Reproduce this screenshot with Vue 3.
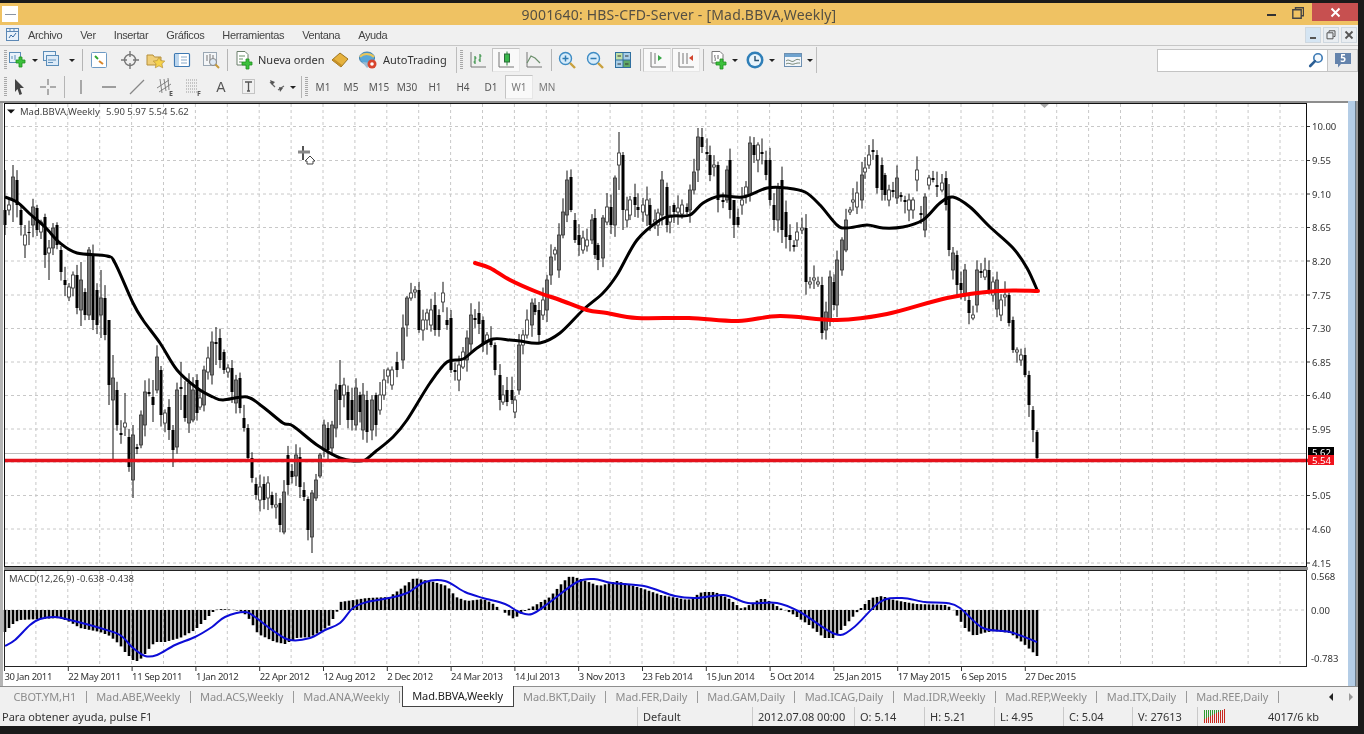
<script setup>
// body top, body bottom, 1 = bear (black), optional wick hi / lo
const keys = [[5,210,225,1,170,235],[9,205,210,0],[13,177,200,0,165,222],[17,180,205,1],[21,210,225,1],[25,235,245,0,225,258],[29,232,233,1],[33,207,225,0],[37,208,230,1],[41,222,232,0],[45,217,255,1],[49,248,253,0,240,280],[53,228,248,0],[57,225,245,1],[61,250,272,1],[65,280,285,1],[69,287,297,0],[73,275,288,0],[77,275,308,1],[81,280,310,0,262,326],[85,292,315,1],[89,250,315,0,247,320],[93,255,320,1],[97,290,325,1],[101,298,315,0,270,338],[105,298,335,1],[109,320,385,1,320,405],[113,378,400,0,355,460],[117,390,425,1],[121,433,435,1],[125,423,427,0,393,436],[129,437,467,1],[133,435,480,0,425,498],[137,447,449,1],[141,415,445,0],[145,392,425,0],[149,392,394,1],[153,397,405,1,380,422],[157,357,390,0],[161,370,415,1],[165,413,423,0],[169,407,430,1],[173,430,450,1,425,467],[177,390,447,0],[181,387,389,1,362,410],[185,395,418,1],[189,383,423,0],[193,390,420,0],[197,380,413,1],[200,398,407,0],[204,370,405,0],[208,358,372,0],[212,342,375,0],[216,342,344,1,327,365],[220,338,360,1],[224,352,370,1],[228,368,372,0],[232,368,392,1],[236,380,403,0],[240,378,408,1],[244,418,428,1],[248,428,458,1],[252,458,478,1],[256,484,495,1],[260,487,500,0],[264,484,500,1],[268,483,498,0],[272,495,505,1],[276,505,507,0],[280,503,525,1],[284,492,532,0],[288,455,485,1],[292,471,477,1],[296,455,476,0],[300,457,487,1],[304,490,497,1],[308,499,530,1],[312,493,537,0,490,553],[316,480,498,0],[320,455,476,0],[324,425,450,0],[328,428,450,1],[332,425,448,0],[336,390,428,0],[340,385,400,1,360,425],[344,385,395,0],[348,392,420,1],[352,400,420,1],[356,388,425,0],[360,395,412,1],[363,395,430,0],[367,400,432,1],[372,400,430,0],[376,395,425,1],[380,395,410,0],[384,380,395,0],[388,370,376,0],[392,370,385,0],[397,362,370,1],[403,328,360,0],[407,298,325,0],[411,293,298,0],[415,290,292,0],[419,290,330,1],[423,320,330,0],[427,313,320,0],[431,310,325,0],[435,305,330,1],[439,315,330,1],[443,293,302,0],[447,320,325,1],[451,318,370,1],[455,370,372,1],[459,365,380,0],[463,352,367,0],[467,338,360,0],[471,315,344,0],[475,318,320,1],[479,313,324,1],[483,320,345,1],[487,335,342,0],[491,340,345,1],[495,345,370,1],[500,375,400,1],[503,395,402,0],[507,390,402,1],[512,390,400,1],[515,400,412,0],[519,345,390,0],[523,335,345,0],[527,320,335,0],[532,303,325,0],[535,305,312,1],[539,310,335,1],[543,300,315,0],[547,280,310,0],[551,257,275,0],[555,250,254,0],[559,235,270,0],[563,212,235,0],[567,180,215,0],[571,177,210,1],[575,220,240,1],[579,235,245,1],[583,238,250,0],[587,240,246,0],[592,220,240,0],[595,218,255,1],[598,245,260,1],[603,218,258,0],[607,207,222,0],[611,207,225,1],[615,178,225,0],[619,153,165,0,132,190],[623,155,210,1,152,230],[627,210,220,0],[630,200,215,0],[635,197,205,1],[638,207,210,1],[643,205,212,0],[647,200,215,0],[650,205,225,1],[655,220,222,0],[658,213,225,0],[662,180,215,0],[667,187,225,1],[670,215,222,0],[674,205,212,1],[678,208,212,0],[682,205,214,0],[687,207,212,1],[690,190,210,0],[694,172,190,0],[698,137,170,0,128,182],[702,137,147,1,128,153],[707,152,154,1],[710,155,175,1],[714,165,167,0],[718,165,200,1],[723,200,202,1],[727,170,200,0],[730,160,210,1],[734,200,225,1,200,238],[738,217,225,1],[742,200,205,0],[746,187,195,0],[750,143,195,0],[754,145,155,1],[758,145,160,0],[762,152,154,1],[766,160,175,1],[770,160,200,1],[774,205,220,1],[778,187,220,0],[782,180,230,1],[786,212,237,1],[790,235,240,1],[794,245,247,1],[797,232,240,0],[802,228,230,0],[806,228,282,1],[810,282,284,0],[814,278,280,0],[818,282,284,0],[822,285,333,1],[826,312,330,0],[830,277,320,0],[834,282,305,1],[837,260,305,0],[842,240,270,0],[846,220,250,0],[850,210,212,0],[853,200,202,0],[857,193,207,0],[862,175,200,0],[865,168,172,0],[869,155,165,0],[873,150,152,1],[877,155,188,1],[882,165,190,1],[885,175,195,1],[889,190,200,0],[893,190,192,1],[897,178,198,0],[901,195,197,1],[905,200,202,1],[909,200,210,0],[913,200,210,0],[917,170,180,0],[921,213,215,1],[925,197,230,0],[929,178,185,0],[933,178,180,1],[937,185,187,1],[942,183,190,0],[946,178,205,1],[949,197,250,1],[953,253,270,0],[957,255,285,1],[961,283,290,1],[965,270,295,0],[969,300,313,1],[973,315,318,0],[977,270,305,0],[981,271,273,1],[985,270,277,0],[989,270,290,1],[993,282,295,0],[997,280,309,0],[1001,300,315,0],[1005,295,297,0],[1009,295,323,1],[1013,320,350,1],[1017,350,352,0],[1021,355,360,0],[1025,355,375,1],[1029,375,405,1],[1033,410,430,1],[1037,432,458,1,430,459]]

let seed = 17
const rnd = () => (seed = (seed * 137 + 59) % 1009) / 1009

const candles = keys.map(([x, top, bot, bear, hi, lo]) => {
  const h = bot - top
  return {
    x, top, h, bear,
    hi: hi ?? top - 2 - rnd() * 12,
    lo: lo ?? bot + 2 + rnd() * 11,
    fill: bear ? '#000' : h > 16 ? '#777' : '#fff'
  }
})

function lerp(pts, x) {
  for (let i = 1; i < pts.length; i++) {
    if (x <= pts[i][0]) {
      const [x0, y0] = pts[i - 1]
      const [x1, y1] = pts[i]
      return y0 + (y1 - y0) * (x - x0) / (x1 - x0)
    }
  }
  return pts[pts.length - 1][1]
}

const histPts = [[5,632],[10,627],[15,622],[20,620],[40,619],[60,618],[70,622],[80,628],[100,632],[110,636],[120,645],[125,652],[133,660],[137,661],[142,658],[148,650],[155,642],[165,642],[180,638],[195,630],[205,620],[215,610],[222,609],[235,610],[243,612],[250,620],[258,634],[275,642],[285,644],[297,638],[310,637],[320,632],[330,625],[335,615],[338,610],[340,602],[367,598],[389,597],[402,588],[414,578],[434,582],[447,586],[456,597],[467,601],[483,599],[492,603],[501,610],[514,619],[523,612],[532,607],[550,597],[563,582],[570,576],[581,579],[599,586],[617,581],[644,589],[661,595],[688,600],[702,592],[715,592],[728,598],[742,609],[760,599],[766,599],[780,608],[791,613],[809,625],[824,638],[833,638],[844,627],[858,611],[871,598],[882,596],[894,600],[916,604],[947,605],[954,611],[965,628],[974,636],[983,633],[994,631],[1010,633],[1023,643],[1037,656]]

const bars = []
for (let x = 5; x <= 1037; x += 4) bars.push({ x, y: lerp(histPts, x) })

// catmull-rom through the points, the indicators are smooth curves
function curve(p) {
  let d = `M${p[0][0]} ${p[0][1]}`
  for (let i = 0; i < p.length - 1; i++) {
    const a = p[i - 1] || p[i]
    const b = p[i]
    const c = p[i + 1]
    const e = p[i + 2] || c
    const c1 = [b[0] + (c[0] - a[0]) / 6, b[1] + (c[1] - a[1]) / 6]
    const c2 = [c[0] - (e[0] - b[0]) / 6, c[1] - (e[1] - b[1]) / 6]
    d += `C${c1[0].toFixed(1)} ${c1[1].toFixed(1)} ${c2[0].toFixed(1)} ${c2[1].toFixed(1)} ${c[0]} ${c[1]}`
  }
  return d
}

const ma = curve([[5,197],[17,202],[30,214],[45,227],[60,243],[77,253],[107,256],[115,263],[133,303],[143,320],[160,343],[177,370],[197,388],[213,397],[223,400],[247,397],[263,407],[283,423],[293,426],[317,445],[340,458],[355,461],[365,460],[375,452],[393,437],[407,420],[430,383],[447,362],[463,359],[477,348],[493,339],[510,340],[520,341],[540,343],[560,333],[583,310],[603,293],[617,275],[637,240],[660,220],[673,216],[690,215],[703,203],[720,196],[743,197],[767,188],[787,188],[805,192],[820,205],[837,225],[847,228],[867,225],[883,228],[903,227],[923,220],[940,203],[953,197],[970,207],[990,227],[1013,248],[1027,268],[1038,292]])

const red = curve([[475,263],[490,268],[510,280],[537,292],[560,300],[587,310],[607,313],[637,318],[689,318],[738,321],[780,316],[837,320],[887,314],[947,298],[997,291],[1038,291]])

const signal = curve([[5,646],[15,640],[30,625],[40,619],[55,617],[70,620],[100,628],[120,635],[133,648],[145,656],[157,655],[175,645],[195,637],[212,627],[225,617],[245,612],[255,617],[275,632],[290,640],[310,638],[325,630],[340,623],[353,608],[367,602],[389,598],[407,593],[425,582],[445,581],[465,592],[483,598],[505,604],[519,612],[532,614],[550,602],[577,582],[594,579],[612,583],[644,586],[675,596],[697,598],[724,595],[748,603],[777,603],[800,612],[835,634],[853,628],[880,602],[902,598],[925,602],[947,603],[960,608],[983,628],[1010,632],[1037,642]])

const gridX = []
for (let i = 1; i <= 40; i++) gridX.push(4 + 31.9 * i)

const prices = [['10.00',126.5],['9.55',160.5],['9.10',194],['8.65',227.5],['8.20',261],['7.75',295],['7.30',328.5],['6.85',362],['6.40',395.5],['5.95',429],['5.05',495.5],['4.60',529],['4.15',563]]
const gridY = [...prices.map(p => p[1]), 462]

const dates = ['30 Jan 2011','22 May 2011','11 Sep 2011','1 Jan 2012','22 Apr 2012','12 Aug 2012','2 Dec 2012','24 Mar 2013','14 Jul 2013','3 Nov 2013','23 Feb 2014','15 Jun 2014','5 Oct 2014','25 Jan 2015','17 May 2015','6 Sep 2015','27 Dec 2015']

const menu = ['Archivo','Ver','Insertar','Gráficos','Herramientas','Ventana','Ayuda']
const periods = ['M1','M5','M15','M30','H1','H4','D1','W1','MN']
const tabs = ['CBOT.YM,H1','Mad.ABE,Weekly','Mad.ACS,Weekly','Mad.ANA,Weekly','Mad.BBVA,Weekly','Mad.BKT,Daily','Mad.FER,Daily','Mad.GAM,Daily','Mad.ICAG,Daily','Mad.IDR,Weekly','Mad.REP,Weekly','Mad.ITX,Daily','Mad.REE,Daily']

const status = [
  { t: 'Para obtener ayuda, pulse F1', w: 638 },
  { t: 'Default', w: 115 },
  { t: '2012.07.08 00:00', w: 102 },
  { t: 'O: 5.14', w: 70 },
  { t: 'H: 5.21', w: 70 },
  { t: 'L: 4.95', w: 69 },
  { t: 'C: 5.04', w: 69 },
  { t: 'V: 27613', w: 65 }
]
const meter = Array.from({ length: 11 }, (_, i) => i)
</script>

<template>
  <div class="screen">
    <div class="win">
      <div class="title">
        <div class="logo"><span class="logo-in"><i class="logo-mark"></i></span></div>
        <div class="title-text">9001640: HBS-CFD-Server - [Mad.BBVA,Weekly]</div>
        <div class="wctl">
          <span class="w-min"></span>
          <span class="w-max">
            <svg width="12" height="12" viewBox="0 0 12 12"><path d="M3.5 2.500V.8h8v8H9.500M.8 2.800h8.400v8.400H.8z" fill="none" stroke="#444" stroke-width="1.400"/></svg>
          </span>
          <span class="w-close">
            <svg width="11" height="11" viewBox="0 0 11 11"><path d="M1.500 1.500l8 8M9.500 1.500l-8 8" stroke="#fff" stroke-width="2"/></svg>
          </span>
        </div>
      </div>

      <div class="menubar">
        <svg class="menu-ic" width="15" height="15" viewBox="0 0 15 15"><rect x="1.500" y="1.500" width="12" height="12" fill="#eaf2fa" stroke="#5c88b5"/><path d="M1.500 4.500h12M5 1v3M9 1v3" stroke="#5c88b5"/><path d="M4 11l2-3 2 2 3-4" fill="none" stroke="#3a6ea5"/></svg>
        <span v-for="m in menu" :key="m" class="mi">{{ m }}</span>
        <div class="mdi">
          <span class="mdi-b blue"><i class="dash"></i></span>
          <span class="mdi-b"><svg width="10" height="10" viewBox="0 0 10 10"><path d="M3 2.500V.8h6v5.700H7.500M1 2.800h6v6H1z" fill="none" stroke="#555"/></svg></span>
          <span class="mdi-b"><svg width="10" height="10" viewBox="0 0 10 10"><path d="M1.500 1.500l7 7M8.500 1.500l-7 7" stroke="#555" stroke-width="1.800"/></svg></span>
        </div>
      </div>

      <div class="toolbar t1">
        <div class="band b1">
          <i class="grip"></i>
          <span class="b w20"><svg class="ic" viewBox="0 0 20 20"><rect x="1.500" y="2.500" width="11" height="10" fill="#e8f2fb" stroke="#5b8db8"/><path d="M4 9V6M7 10V5" stroke="#5b8db8"/><path d="M11 7h3v3h3v3h-3v4h-3v-4H8v-3h3z" fill="#3cc03c" stroke="#1e8f1e" stroke-width=".8"/></svg></span>
          <span class="caret w14"></span>
          <span class="b w20"><svg class="ic" viewBox="0 0 20 20"><rect x="1.500" y="1.500" width="12" height="9" fill="#e8f2fb" stroke="#5b8db8"/><rect x="4.500" y="5.500" width="12" height="10" fill="#dceaf7" stroke="#5b8db8"/><path d="M6 10h8M6 12.500h5" stroke="#5b8db8"/></svg></span>
          <span class="caret w20"></span>
          <i class="sep"></i>
          <span class="b w26 ml3"><svg class="ic" viewBox="0 0 20 20"><rect x="2.500" y="2.500" width="15" height="15" rx="1" fill="#fff" stroke="#6d9ac4"/><path d="M6 6l3 3" stroke="#2fa52f" stroke-width="2"/><path d="M10 11l4 3" stroke="#d8862a" stroke-width="2"/></svg></span>
          <span class="b w26 ml5"><svg class="ic" viewBox="0 0 20 20"><circle cx="10" cy="10" r="5.500" fill="none" stroke="#777" stroke-width="1.400"/><path d="M10 1v6M10 13v6M1 10h6M13 10h6" stroke="#777" stroke-width="1.400"/></svg></span>
          <span class="b w26"><svg class="ic" viewBox="0 0 20 20"><path d="M1 5h6l1.500 2H15v8H1z" fill="#f0cf7a" stroke="#b58f3a"/><path d="M13 7l1.800 3.600 4 .5-2.900 2.700.8 4-3.700-2-3.700 2 .8-4-2.900-2.700 4-.5z" fill="#f6d24a" stroke="#b58f3a" stroke-width=".7"/></svg></span>
          <span class="b w26"><svg class="ic" viewBox="0 0 20 20"><rect x="2.500" y="3.500" width="15" height="13" rx="1" fill="#fff" stroke="#3e79b2" stroke-width="1.200"/><rect x="3" y="4" width="4" height="12" fill="#bcd6ee"/><path d="M9 7h6M9 10h6M9 13h6" stroke="#89a9c8"/></svg></span>
          <span class="b w26 ml3"><svg class="ic" viewBox="0 0 20 20"><rect x="2.500" y="2.500" width="13" height="13" fill="#f4f6f8" stroke="#9aa7b3"/><path d="M6 5v6M9 4v7M12 5v6" stroke="#777"/><circle cx="12" cy="12" r="3.500" fill="#dfeaf5" stroke="#888"/><path d="M14.500 14.500l3.500 3.500" stroke="#c79a3b" stroke-width="2"/></svg></span>
          <i class="sep ml3"></i>
          <span class="b w22 ml5"><svg class="ic" viewBox="0 0 20 20"><path d="M3 1.500h8l3 3V15H3z" fill="#fff" stroke="#6b7f6b"/><path d="M5 6h6M5 9h4M5 12h3" stroke="#6b8f6b"/><path d="M12 9h3v3h3v3h-3v4h-3v-4H8v-3h4z" fill="#3cc03c" stroke="#1e8f1e" stroke-width=".8"/></svg></span>
          <span class="tx nueva">Nueva orden</span>
          <span class="b w26 ml3"><svg class="ic" viewBox="0 0 20 20"><path d="M10 3l8 6-7 8-9-7z" fill="#e6b23e" stroke="#9c7420"/><path d="M2 10l9 7 1-2-8-6z" fill="#c48f27"/></svg></span>
          <span class="b w26 ml2"><svg class="ic" viewBox="0 0 20 20"><ellipse cx="9" cy="8" rx="7.500" ry="6" fill="#58a7d8" stroke="#3a7fae"/><path d="M2 7c3-4 10-4 14 0" fill="none" stroke="#e8c55a" stroke-width="2"/><path d="M4 12l5 6 6-5z" fill="#9bbcd3"/><circle cx="14" cy="14" r="4.500" fill="#d8452e"/><circle cx="14" cy="14" r="1.800" fill="#fff"/></svg></span>
          <span class="tx auto">AutoTrading</span>
        </div>
        <div class="band b2">
          <i class="grip"></i>
          <span class="b w28"><svg class="ic" viewBox="0 0 20 20"><path d="M3 2v15h15" fill="none" stroke="#777"/><path d="M7 6v8M5.500 12H7M7 8h1.500M12 4v8M10.500 10H12M12 6h1.500" stroke="#2b8a3a" stroke-width="1.100"/></svg></span>
          <span class="b w28 on"><svg class="ic" viewBox="0 0 20 20"><path d="M3 2v15h15" fill="none" stroke="#777"/><path d="M11 1.500v14" stroke="#2b8a3a"/><rect x="8.500" y="4" width="5" height="8" fill="#38b84a" stroke="#2b6a3a"/></svg></span>
          <span class="b w28"><svg class="ic" viewBox="0 0 20 20"><path d="M3 2v15h15" fill="none" stroke="#777"/><path d="M3 13l4-7 4 2 5 5" fill="none" stroke="#6c8f6c" stroke-width="1.200"/></svg></span>
          <i class="sep ml3"></i>
          <span class="b w28 ml1"><svg class="ic" viewBox="0 0 20 20"><circle cx="8.500" cy="8.500" r="6" fill="#d7ecfa" stroke="#3f8cc4" stroke-width="1.400"/><path d="M5.500 8.500h6M8.500 5.500v6" stroke="#2f7bb3" stroke-width="1.500"/><path d="M13 13l5 5" stroke="#c9a13f" stroke-width="2.400"/></svg></span>
          <span class="b w28"><svg class="ic" viewBox="0 0 20 20"><circle cx="8.500" cy="8.500" r="6" fill="#d7ecfa" stroke="#3f8cc4" stroke-width="1.400"/><path d="M5.500 8.500h6" stroke="#2f7bb3" stroke-width="1.500"/><path d="M13 13l5 5" stroke="#c9a13f" stroke-width="2.400"/></svg></span>
          <span class="b w28"><svg class="ic" viewBox="0 0 20 20"><rect x="2" y="2" width="16" height="16" fill="#2f6f9f"/><rect x="3" y="3" width="6.500" height="6.500" fill="#bfe0a8"/><rect x="10.500" y="3" width="6.500" height="6.500" fill="#a9cfe8"/><rect x="3" y="10.500" width="6.500" height="6.500" fill="#a9cfe8"/><rect x="10.500" y="10.500" width="6.500" height="6.500" fill="#5fa866"/><path d="M4.500 6h3.500M12 6h3.500M4.500 14h3.500M12 14h3.500" stroke="#333"/></svg></span>
          <i class="sep ml3"></i>
          <span class="b w28 on ml2"><svg class="ic" viewBox="0 0 20 20"><path d="M4 2v15h15" fill="none" stroke="#777"/><path d="M8 3v11" stroke="#777"/><path d="M11 5l4 3-4 3z" fill="#38a848"/></svg></span>
          <span class="b w28 on ml1"><svg class="ic" viewBox="0 0 20 20"><path d="M3 2v15h15" fill="none" stroke="#777"/><path d="M7 3v11M11 3v11" stroke="#777"/><path d="M17 5l-4 3 4 3z" fill="#d2452e"/></svg></span>
          <i class="sep ml3"></i>
          <span class="b w24 ml2"><svg class="ic" viewBox="0 0 20 20"><path d="M4 1.500h8l3 3V13H4z" fill="#fff" stroke="#777"/><path d="M7 5c-1 3 1 2 0 6M10 5v4" stroke="#666" fill="none"/><path d="M12 9h3v3h3v3h-3v4h-3v-4H8v-3h4z" fill="#3cc03c" stroke="#1e8f1e" stroke-width=".8"/></svg></span>
          <span class="caret w10"></span>
          <span class="b w24 ml3"><svg class="ic" viewBox="0 0 20 20"><circle cx="10" cy="10" r="8.500" fill="#2f7fb8"/><circle cx="10" cy="10" r="6" fill="#e9f4fb"/><path d="M10 6v4.500h4" fill="none" stroke="#28506e" stroke-width="1.400"/></svg></span>
          <span class="caret w10"></span>
          <span class="b w24 ml4"><svg class="ic" viewBox="0 0 20 20"><rect x="1.500" y="3.500" width="17" height="13" fill="#f2f6fa" stroke="#6d8fb0"/><rect x="2" y="4" width="16" height="3" fill="#6fa3cf"/><path d="M3 11c3-3 5 2 8 0s3-2 6-1M3 14c3-2 5 1 8 0s3-1 6-1" fill="none" stroke="#7a8a7a"/></svg></span>
          <span class="caret w10"></span>
        </div>
        <div class="spacer"></div>
        <div class="search">
          <svg width="16" height="16" viewBox="0 0 16 16"><circle cx="10" cy="6" r="4.200" fill="#f4f9fd" stroke="#3c79b4" stroke-width="1.600"/><path d="M7 9.200L2.200 14" stroke="#2c5f95" stroke-width="2.600" stroke-linecap="round"/></svg>
        </div>
        <div class="msg">
          <svg width="18" height="18" viewBox="0 0 18 18"><path d="M1 2h16v11H7l-3 3.500V13H1z" fill="#6483ac"/></svg>
          <span class="msg-n">5</span>
        </div>
      </div>

      <div class="toolbar t2">
        <i class="grip"></i>
        <span class="b w22"><svg class="ic" viewBox="0 0 20 20"><path d="M6 2l9 9h-4l2 6-2.500 1-2-6-2.500 3z" fill="#444"/></svg></span>
        <span class="b w28 ml4"><svg class="ic" viewBox="0 0 20 20"><path d="M10 2v6M10 12v6M2 10h6M12 10h6" stroke="#666"/></svg></span>
        <i class="sep ml2"></i>
        <span class="b w28 ml2"><svg class="ic" viewBox="0 0 20 20"><path d="M10 3v14" stroke="#777" stroke-width="1.200"/></svg></span>
        <span class="b w28"><svg class="ic" viewBox="0 0 20 20"><path d="M3 10h14" stroke="#666" stroke-width="1.200"/></svg></span>
        <span class="b w28"><svg class="ic" viewBox="0 0 20 20"><path d="M3 17L17 3" stroke="#888" stroke-width="1.200"/></svg></span>
        <span class="b w28"><svg class="ic" viewBox="0 0 20 20"><path d="M2 11L14 3M4 15L16 7M5 2l2 14M9 2l2 12M13 1l1 12" stroke="#777" stroke-width=".9"/><text x="14" y="19" class="ic-t">E</text></svg></span>
        <span class="b w28"><svg class="ic" viewBox="0 0 20 20"><path d="M3 3h12M3 6h12M3 9h12M3 12h12M3 15h12" stroke="#999" stroke-dasharray="1 1"/><text x="14" y="19" class="ic-t">F</text></svg></span>
        <span class="b w28 big-a">A</span>
        <span class="b w28"><svg class="ic" viewBox="0 0 20 20"><rect x="3.500" y="2.500" width="12" height="14" fill="none" stroke="#999" stroke-dasharray="1 1"/><path d="M6 5h7M9.500 5v9M8 14h3" stroke="#555" stroke-width="1.300" fill="none"/></svg></span>
        <span class="b w22 ml3"><svg class="ic" viewBox="0 0 20 20"><path d="M3 5l5 5M11 13l6-4" stroke="#666" stroke-width="1.200"/><path d="M3 3l5 2-3 3zM12 10l4 1-3 4z" fill="#555"/></svg></span>
        <span class="caret w10"></span>
        <i class="sep ml3"></i>
        <i class="grip ml3"></i>
        <span v-for="p in periods" :key="p" class="b w28 per" :class="{ on: p === 'W1', dim: p === 'MN' || p === 'W1' }">{{ p }}</span>
      </div>

      <div class="body">
        <svg class="chart" width="1348" height="585" viewBox="0 101 1348 585">
          <rect x="0" y="101" width="1348" height="585" fill="#fff"/>
          <rect x="0" y="101" width="3" height="585" fill="#b5b5b5"/>
          <rect x="0" y="101" width="1348" height="2" fill="#8d8d8d"/>

          <!-- price pane -->
          <g class="grid">
            <line v-for="x in gridX" :key="'v' + x" :x1="x" :x2="x" y1="104" y2="566"/>
            <line v-for="y in gridY" :key="'h' + y" x1="5" x2="1307" :y1="y" :y2="y"/>
          </g>
          <line x1="5" x2="1307" y1="453.500" y2="453.500" stroke="#bcbcbc"/>
          <g v-for="c in candles" :key="c.x">
            <line :x1="c.x" :x2="c.x" :y1="c.hi" :y2="c.lo" stroke="#111"/>
            <rect :x="c.x - 1.500" :y="c.top" width="3" :height="c.h" :fill="c.fill" :stroke="c.bear ? 'none' : '#333'" stroke-width=".8"/>
          </g>
          <path :d="ma" fill="none" stroke="#000" stroke-width="3" stroke-linejoin="round"/>
          <path :d="red" fill="none" stroke="#f00" stroke-width="4" stroke-linejoin="round" stroke-linecap="round"/>
          <line x1="5" x2="1308" y1="460.500" y2="460.500" stroke="#e4121c" stroke-width="3.500"/>

          <path d="M1039 103h11l-5.500 5z" fill="#a8a8a8"/>

          <!-- cursor -->
          <g class="cursor">
            <path d="M303 146v14" stroke="#555" stroke-width="2"/>
            <path d="M298 152h12" stroke="#888" stroke-width="3"/>
            <path d="M310 156l5 5h-2v3h-6v-3h-2z" fill="#fff" stroke="#444"/>
          </g>

          <path d="M7 109.500h8l-4 4z" fill="#111"/>
          <text x="20" y="115" class="lab">Mad.BBVA,Weekly</text>
          <text x="106" y="115" class="lab">5.90 5.97 5.54 5.62</text>

          <!-- macd pane -->
          <g class="grid">
            <line v-for="x in gridX" :key="'w' + x" :x1="x" :x2="x" y1="571" y2="665"/>
            <line x1="5" x2="1307" y1="610" y2="610"/>
          </g>
          <line v-for="b in bars" :key="'b' + b.x" :x1="b.x" :x2="b.x" y1="610" :y2="b.y" stroke="#000" stroke-width="2.600"/>
          <path :d="signal" fill="none" stroke="#0d0dd6" stroke-width="2" stroke-linejoin="round"/>
          <text x="9" y="582" class="lab">MACD(12,26,9) -0.638 -0.438</text>

          <!-- frames -->
          <rect x="4.500" y="103.500" width="1302" height="463" fill="none" stroke="#111"/>
          <rect x="4" y="567" width="1304" height="3" fill="#8e8e8e"/>
          <rect x="4.500" y="570.500" width="1302" height="96" fill="none" stroke="#222"/>

          <!-- axis -->
          <g v-for="p in prices" :key="p[0]">
            <line x1="1307" x2="1310" :y1="p[1]" :y2="p[1]" stroke="#333"/>
            <text x="1312" :y="p[1] + 3.500" class="ax">{{ p[0] }}</text>
          </g>
          <rect x="1308" y="447" width="26" height="9" fill="#000"/>
          <text x="1312" y="456" class="ax tag">5.62</text>
          <rect x="1308" y="455" width="26" height="10" fill="#f0141e"/>
          <text x="1312" y="463.500" class="ax tag">5.54</text>
          <text x="1311" y="580" class="ax">0.568</text>
          <text x="1311" y="613.500" class="ax">0.00</text>
          <text x="1311" y="662" class="ax">-0.783</text>

          <g v-for="(d, i) in dates" :key="d">
            <line :x1="4.500 + 63.800 * i" :x2="4.500 + 63.800 * i" y1="666" y2="671" stroke="#333"/>
            <text :x="4.500 + 63.800 * i" y="680" class="ax dt">{{ d }}</text>
          </g>
        </svg>
        <div class="vbar"></div>
      </div>

      <div class="tabs">
        <span v-for="t in tabs" :key="t" class="tab" :class="{ act: t === 'Mad.BBVA,Weekly' }">{{ t }}</span>
        <div class="tab-arrows">
          <svg width="26" height="10" viewBox="0 0 26 10"><path d="M4 1v8L0 5z" fill="#222"/><path d="M20 1v8l4-4z" fill="#999"/></svg>
        </div>
      </div>

      <div class="status">
        <span v-for="s in status" :key="s.t" class="cell" :style="{ width: s.w + 'px' }">{{ s.t }}</span>
        <span class="cell meter">
          <i v-for="n in meter" :key="n" class="m-bar"><b class="m-red" :style="{ height: 4 + n * 1.000 + 'px' }"></b></i>
        </span>
        <span class="size">4017/6 kb</span>
      </div>
    </div>
  </div>
</template>

<style>
html, body { background: #161616; overflow: hidden; }
</style>

<style scoped>
.screen {
  width: 1364px;
  height: 734px;
  background: #1a1a1a;
  padding-top: 3px;
  box-sizing: border-box;
  overflow: hidden;
}
.win {
  width: 1358px;
  height: 723px;
  font-family: "Noto Sans", Tahoma, sans-serif;
  font-size: 11px;
  color: #333;
  background: #f0f0f0;
  display: flex;
  flex-direction: column;
  filter: blur(.35px);
}

.title {
  height: 22px;
  background: #efc263;
  display: grid;
  grid-template-columns: 1fr auto 1fr;
  align-items: center;
  flex: none;
}
.logo { padding-left: 2px; display: flex; }
.logo-in { width: 16px; height: 16px; background: #fff; display: flex; align-items: center; justify-content: center; }
.logo-mark { width: 11px; height: 1px; background: #8b94a3; }
.title-text { font-size: 14px; color: #544f43; letter-spacing: .19px; }
.wctl { display: flex; justify-content: flex-end; height: 100%; align-items: flex-start; }
.w-min { width: 9px; height: 2px; background: #333; margin: 11px 16px 0 0; }
.w-max { width: 12px; margin: 4px 8px 0 0; display: flex; }
.w-close {
  width: 46px;
  height: 18px;
  background: #c75050;
  display: flex;
  align-items: center;
  justify-content: center;
}

.menubar {
  height: 21px;
  flex: none;
  display: flex;
  align-items: center;
  padding: 0 0 1px 5px;
  box-sizing: border-box;
  border-bottom: 1px solid #c6c6c6;
}
.menu-ic { margin-right: 8px; }
.mi { margin-right: 18px; color: #444; font-family: "Liberation Sans", sans-serif; letter-spacing: -.35px; }
.mdi { margin-left: auto; display: flex; gap: 2px; padding-right: 1px; }
.mdi-b {
  width: 16px;
  height: 16px;
  border: 1px solid #cfd8e0;
  box-sizing: border-box;
  display: flex;
  align-items: center;
  justify-content: center;
  background: #e9edf1;
}
.mdi-b.blue { background: #d5e5f3; align-items: flex-end; padding-bottom: 3px; }
.dash { width: 6px; height: 2px; background: #555; }

.toolbar { display: flex; align-items: center; flex: none; }
.t1 { height: 28px; }
.t2 { height: 27px; padding: 0 0 1px 4px; box-sizing: border-box; }
.band {
  height: 26px;
  display: flex;
  align-items: center;
  border-right: 1px solid #bdbdbd;
  box-sizing: border-box;
}
.b1 { width: 457px; padding-left: 4px; }
.b2 { width: 360px; padding-left: 3px; }
.spacer { width: 340px; }

.grip {
  width: 3px;
  height: 20px;
  flex: none;
  margin-right: 1px;
  background: repeating-linear-gradient(#a8a8a8 0 1px, transparent 1px 2px);
}
.sep { width: 1px; height: 22px; background: #b5b5b5; flex: none; }
.b {
  height: 24px;
  display: flex;
  align-items: center;
  justify-content: center;
  flex: none;
  box-sizing: border-box;
}
.b.on {
  background: #f9f9f9;
  border: 1px solid;
  border-color: #c4c4c4 #e6e6e6 #e6e6e6 #c4c4c4;
}
.ic { width: 20px; height: 20px; }
.ic-t { font: 700 7px "Noto Sans", sans-serif; fill: #555; }
.w10 { width: 10px; }
.w14 { width: 14px; }
.w20 { width: 20px; }
.w22 { width: 22px; }
.w24 { width: 24px; }
.w26 { width: 26px; }
.w28 { width: 28px; }
.ml1 { margin-left: 1px; }
.ml2 { margin-left: 2px; }
.ml3 { margin-left: 3px; }
.ml4 { margin-left: 4px; }
.ml5 { margin-left: 5px; }
.caret {
  height: 24px;
  flex: none;
  display: flex;
  align-items: center;
  justify-content: center;
}
.caret::after {
  content: "";
  border-left: 3px solid transparent;
  border-right: 3px solid transparent;
  border-top: 3px solid #222;
}
.tx { flex: none; color: #333; white-space: nowrap; margin: 0 0 1px 3px; }
.nueva { width: 66px; }
.auto { width: 64px; margin-left: 2px; }
.big-a { font-size: 14px; color: #555; font-family: "Liberation Sans", sans-serif; }
.per { font-size: 10px; color: #555; }
.per.dim { color: #777; }

.search {
  width: 171px;
  height: 23px;
  background: #fff;
  border: 1px solid #c4c4c4;
  box-sizing: border-box;
  display: flex;
  align-items: center;
  justify-content: flex-end;
  padding-right: 3px;
}
.msg {
  width: 30px;
  height: 23px;
  border: 1px solid #c4c4c4;
  border-left: 0;
  box-sizing: border-box;
  display: flex;
  align-items: center;
  justify-content: center;
  position: relative;
  background: #ececec;
}
.msg-n {
  position: absolute;
  left: 9px;
  top: 2px;
  color: #fff;
  font-weight: 700;
  font-size: 10px;
  line-height: 12px;
  width: 12px;
  text-align: center;
}

.body { display: flex; height: 585px; flex: none; }
.chart { display: block; flex: none; }
.vbar {
  width: 10px;
  background: linear-gradient(90deg, #b4cde6 0 7px, #6a7c8c 7px 8px, #9a9a9a 8px);
}
.grid line { stroke: #c8c8c8; stroke-dasharray: 3 3; }
.lab { font: 9.500px "Noto Sans", sans-serif; fill: #444; }
.ax { font: 9.500px "Noto Sans", sans-serif; fill: #333; }
.dt { letter-spacing: -.35px; }
.tag { fill: #fff; }

.tabs {
  height: 21px;
  flex: none;
  display: flex;
  align-items: center;
  padding-left: 4px;
  border-top: 1px solid #8e8e8e;
  box-sizing: border-box;
  position: relative;
  background: #f0f0f0;
}
.tab {
  height: 12px;
  line-height: 12px;
  padding: 0 9.500px;
  color: #8c8c8c;
  letter-spacing: -.1px;
  border-right: 1px solid #9a9a9a;
  white-space: nowrap;
}
.tab.act {
  height: 20px;
  line-height: 19px;
  background: #fff;
  color: #222;
  border: 1px solid #444;
  border-top: 0;
  margin-top: -1px;
  margin-left: 2px;
}
.tab-arrows { margin-left: auto; padding-right: 3px; display: flex; }

.status {
  height: 19px;
  flex: none;
  display: flex;
  align-items: center;
  background: #f0f0f0;
  color: #333;
}
.cell {
  height: 100%;
  display: flex;
  align-items: center;
  padding-left: 5px;
  box-sizing: border-box;
  border-right: 1px solid #c9c9c9;
  white-space: nowrap;
  flex: none;
}
.cell:first-child { padding-left: 2px; }
.meter { border: 0; gap: 1px; padding-left: 6px; width: 70px; }
.m-bar {
  width: 1px;
  height: 13px;
  background: #2f9a2f;
  display: flex;
  align-items: flex-end;
}
.m-red { width: 1px; background: #c8281e; display: block; }
.size { margin-left: 0; }
</style>
